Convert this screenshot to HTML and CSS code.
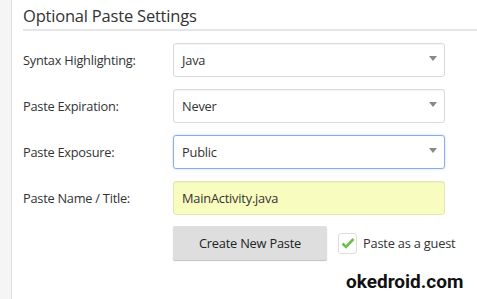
FILE: index.html
```html
<!DOCTYPE html>
<html lang="en">
<head>
    <meta charset="UTF-8">
    <title>Optional Paste Settings</title>
    <link rel="stylesheet" href="styles.css">
</head>
<body>
    <div class="sidebar"></div>
    <div class="content">
        <h2 class="section-title">Optional Paste Settings</h2>

        <div class="form-row">
            <label>Syntax Highlighting:</label>
            <div class="select">Java<span class="caret"></span></div>
        </div>
        <div class="form-row">
            <label>Paste Expiration:</label>
            <div class="select">Never<span class="caret"></span></div>
        </div>
        <div class="form-row">
            <label>Paste Exposure:</label>
            <div class="select focused">Public<span class="caret"></span></div>
        </div>
        <div class="form-row">
            <label>Paste Name / Title:</label>
            <div class="text-input">MainActivity.java</div>
        </div>

        <div class="actions">
            <button class="submit-btn">Create New Paste</button>
            <span class="checkbox">
                <svg width="14" height="12" viewBox="0 0 14 12"><path d="M1.5 6.5 L5 10 L12.5 2" fill="none" stroke="#6cc04a" stroke-width="2.6"/></svg>
            </span>
            <span class="guest">Paste as a guest</span>
        </div>
    </div>
    <div class="watermark">okedroid.com</div>
</body>
</html>
```

FILE: styles.css
```css
body {
    margin: 0;
    background: #fff;
    font-family: 'Open Sans', sans-serif;
    color: #333;
    display: flex;
    height: 299px;
    overflow: hidden;
    position: relative;
}
.sidebar {
    width: 11px;
    background: #f5f5f5;
    border-right: 1px solid #ddd;
    flex-shrink: 0;
}
.content {
    flex: 1;
    padding-left: 11px;
}
.section-title {
    font-size: 16.5px;
    font-weight: normal;
    color: #333;
    margin: 0;
    padding-top: 4px;
    height: 25px;
    border-bottom: 2px solid #e5e5e5;
    letter-spacing: -0.2px;
}
.form-row {
    display: flex;
    align-items: center;
    margin-top: 12px;
}
.form-row label {
    width: 150px;
    font-size: 12.8px;
    letter-spacing: -0.25px;
}
.select, .text-input {
    width: 262px;
    height: 32px;
    border: 1px solid #d9d9d9;
    border-radius: 3px;
    padding-left: 8px;
    font-size: 12.8px;
    letter-spacing: -0.2px;
    display: flex;
    align-items: center;
    position: relative;
    box-shadow: inset 0 1px 1px rgba(0, 0, 0, 0.04);
}
.select.focused {
    border-color: #89aeee;
    box-shadow: 0 0 2px rgba(102, 150, 233, 0.5);
}
.caret {
    position: absolute;
    right: 7px;
    top: 12px;
    border-left: 4px solid transparent;
    border-right: 4px solid transparent;
    border-top: 5px solid #888;
}
.text-input {
    background: #f9fcbf;
    border-color: #e3e6b5;
}
.actions {
    display: flex;
    align-items: center;
    margin-top: 11px;
    padding-left: 150px;
}
.submit-btn {
    width: 154px;
    height: 34px;
    border: none;
    border-radius: 2px;
    background: #dedede;
    box-shadow: 0 1px 1px rgba(0, 0, 0, 0.25);
    font-family: 'Open Sans', sans-serif;
    font-size: 12.8px;
    letter-spacing: -0.2px;
    color: #222;
}
.checkbox {
    width: 17px;
    height: 19px;
    margin-left: 11px;
    border: 1px solid #ddd;
    border-radius: 3px;
    display: flex;
    align-items: center;
    justify-content: center;
}
.guest {
    margin-left: 6px;
    font-size: 12.8px;
    letter-spacing: -0.2px;
}
.watermark {
    position: absolute;
    left: 346px;
    top: 270px;
    font-family: Roboto, sans-serif;
    font-weight: bold;
    font-size: 19px;
    color: #111;
}
```
